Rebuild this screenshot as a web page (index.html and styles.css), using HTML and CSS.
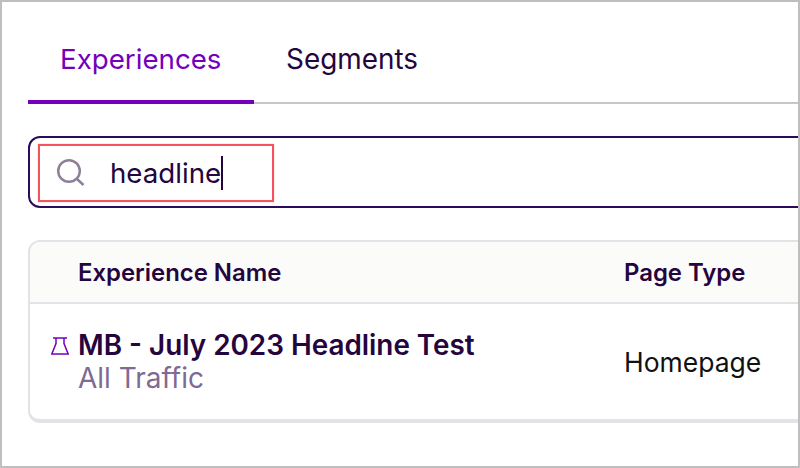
FILE: index.html
```html
<!DOCTYPE html>
<html lang="en">
  <head>
    <meta charset="UTF-8" />
    <meta name="viewport" content="width=device-width, initial-scale=1.0" />
    <title>Experiences</title>
    <link rel="stylesheet" href="styles.css">
  </head>
  <body>
    <div class="frame">
      <div class="content">
        <nav class="tabs">
          <a class="tab tab-active">Experiences</a>
          <a class="tab">Segments</a>
        </nav>
        <div class="search">
          <div class="search-mark">
            <svg class="search-icon" width="30" height="30" viewBox="0 0 30 30" fill="none">
              <circle cx="13" cy="13" r="10.8" stroke="#8f8098" stroke-width="2.5"/>
              <path d="M21 21L27.5 27" stroke="#8f8098" stroke-width="2.5"/>
            </svg>
            <span class="search-text">headline</span><span class="caret"></span>
          </div>
        </div>
        <div class="card">
          <div class="row row-head">
            <div class="col-name">Experience Name</div>
            <div class="col-type">Page Type</div>
          </div>
          <div class="row row-body">
            <svg class="flask" width="18" height="18" viewBox="0 0 18 18" fill="none">
              <path d="M2 1H16M5 1V6.5L0.8 17H17.2L13 6.5V1" stroke="#7300bd" stroke-width="1.5"/>
            </svg>
            <div class="col-name body-name">
              <div class="exp-title">MB - July 2023 Headline Test</div>
              <div class="exp-sub">All Traffic</div>
            </div>
            <div class="col-type">Homepage</div>
          </div>
        </div>
      </div>
    </div>
  </body>
</html>
```

FILE: styles.css
```css
* {
  box-sizing: border-box;
}
html, body {
  margin: 0;
  background: #fff;
}
.frame {
  width: 800px;
  height: 468px;
  border: 2px solid #bfbfbf;
  overflow: hidden;
  font-family: "Inter", "Liberation Sans", sans-serif;
}
.content {
  width: 1000px;
  padding-left: 26px;
}
.tabs {
  display: flex;
  height: 102px;
  border-bottom: 2px solid #c8c6cb;
}
.tab {
  height: 102px;
  padding: 41px 32px 0;
  font-size: 27.9px;
  line-height: 32px;
  color: #24053e;
}
.tab-active {
  width: 226px;
  padding-left: 32px;
  padding-right: 0;
  font-size: 27.7px;
  color: #7300bd;
  border-bottom: 4px solid #7300bd;
}
.search {
  display: flex;
  height: 72px;
  margin-top: 32px;
  padding: 6px 8px;
  border: 2px solid #2b0a5c;
  border-radius: 12px;
}
.search-mark {
  display: flex;
  align-items: center;
  width: 236px;
  height: 58px;
  padding-left: 16px;
  border: 2px solid #f4525d;
  box-shadow: 0 0 1px rgba(244, 82, 93, 0.6);
}
.search-icon {
  flex: none;
}
.search-text {
  margin-left: 24px;
  font-size: 27.7px;
  color: #24053e;
}
.caret {
  width: 2px;
  height: 34px;
  background: #24053e;
}
.card {
  margin-top: 32px;
  height: 183px;
  border: 2px solid #e2e2e7;
  border-bottom-width: 4px;
  border-radius: 12px;
}
.row {
  display: flex;
  align-items: center;
  position: relative;
}
.row-head {
  height: 62px;
  background: #fbfbf9;
  border-bottom: 2px solid #e2e2e7;
  border-radius: 10px 10px 0 0;
  font-size: 23.9px;
  font-weight: 600;
  color: #24053e;
}
.row-body {
  height: 115px;
}
.col-name {
  width: 546px;
  margin-left: 48px;
}
.body-name {
  padding-bottom: 2px;
}
.flask {
  position: absolute;
  left: 21px;
  top: 33px;
}
.exp-title {
  font-size: 27.85px;
  line-height: 34px;
  font-weight: 600;
  color: #24053e;
}
.exp-sub {
  font-size: 28px;
  line-height: 32px;
  color: #7f6a94;
}
.col-type {
  font-size: 26.5px;
  color: #111;
}
.row-head .col-type {
  font-size: 23.9px;
  color: #24053e;
}
```
